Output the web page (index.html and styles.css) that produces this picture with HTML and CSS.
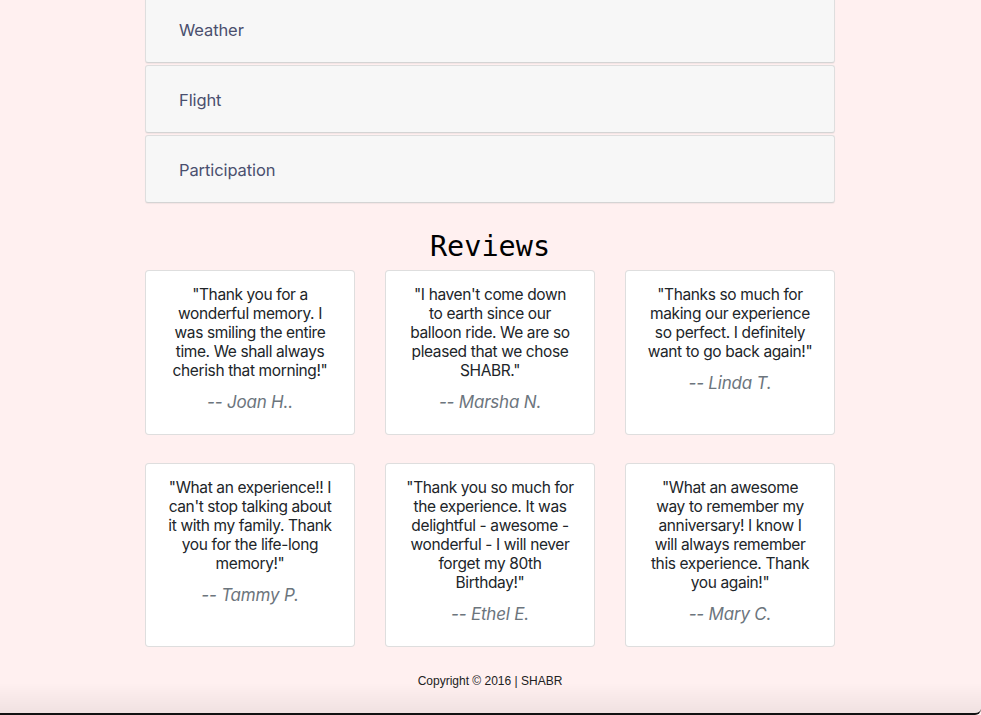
FILE: index.html
```html
<!DOCTYPE html>
<html lang="en">
<head>
<meta charset="utf-8">
<title>SHABR Reviews</title>
<link rel="stylesheet" href="styles.css">
</head>
<body>
<div class="page">
  <div class="panels">
    <div class="panel">Weather</div>
    <div class="panel">Flight</div>
    <div class="panel">Participation</div>
  </div>

  <h2 class="reviews-title">Reviews</h2>

  <div class="reviews">
    <div class="card">
      <p class="quote">"Thank you for a wonderful memory. I was smiling the entire time. We shall always cherish that morning!"</p>
      <p class="author">-- Joan H..</p>
    </div>
    <div class="card">
      <p class="quote">"I haven't come down to earth since our balloon ride. We are so pleased that we chose SHABR."</p>
      <p class="author">-- Marsha N.</p>
    </div>
    <div class="card">
      <p class="quote">"Thanks so much for making our experience so perfect. I definitely want to go back again!"</p>
      <p class="author">-- Linda T.</p>
    </div>
    <div class="card">
      <p class="quote">"What an experience!! I can't stop talking about it with my family. Thank you for the life-long memory!"</p>
      <p class="author">-- Tammy P.</p>
    </div>
    <div class="card">
      <p class="quote">"Thank you so much for the experience. It was delightful - awesome - wonderful - I will never forget my 80th Birthday!"</p>
      <p class="author">-- Ethel E.</p>
    </div>
    <div class="card">
      <p class="quote">"What an awesome way to remember my anniversary! I know I will always remember this experience. Thank you again!"</p>
      <p class="author">-- Mary C.</p>
    </div>
  </div>

  <footer class="footer">Copyright © 2016 | SHABR</footer>
</div>
<div class="window-edge"></div>
</body>
</html>
```

FILE: styles.css
```css
html, body {
  margin: 0;
  padding: 0;
  background: #fff0f0;
  height: 715px;
  overflow: hidden;
}

body {
  font-family: Inter, "Noto Sans", sans-serif;
  color: #212529;
}

.page {
  width: 690px;
  margin: -5px 0 0 calc(50% - 345.5px);
}

.panels {
  display: flex;
  flex-direction: column;
  gap: 2px;
}

.panel {
  box-sizing: border-box;
  height: 68px;
  display: flex;
  align-items: center;
  padding: 1px 33px 0;
  background: #f7f7f7;
  border: 1px solid #dedede;
  border-bottom-color: #d4d4d4;
  border-radius: 3px;
  box-shadow: 0 1px 1px rgba(0, 0, 0, 0.05);
  font-size: 16.5px;
  letter-spacing: -0.1px;
  color: #4a4f6e;
}

.reviews-title {
  margin: 21px 0 0;
  height: 46px;
  text-align: center;
  font-family: "DejaVu Sans Mono", monospace;
  font-weight: normal;
  font-size: 28.5px;
  line-height: 45px;
  color: #000;
}

.reviews {
  display: grid;
  grid-template-columns: repeat(3, 210px);
  column-gap: 30px;
  row-gap: 28px;
}

.card {
  box-sizing: border-box;
  background: #fff;
  border: 1px solid rgba(0, 0, 0, 0.13);
  border-radius: 4px;
  padding: 14px 20px 20px;
  text-align: center;
}

.quote {
  margin: 0 0 10px;
  font-size: 15.5px;
  letter-spacing: -0.38px;
  line-height: 19px;
  color: #212529;
}

.author {
  margin: 0;
  font-size: 17px;
  letter-spacing: -0.2px;
  line-height: 24px;
  font-style: italic;
  color: #6c757d;
}

.footer {
  margin-top: 27px;
  text-align: center;
  font-family: "Liberation Sans", Arial, sans-serif;
  font-size: 12px;
  line-height: 14px;
  color: #222;
}

.window-edge {
  position: fixed;
  left: 0;
  right: 0;
  bottom: 0;
  height: 30px;
  background: linear-gradient(to bottom, rgba(0, 0, 0, 0), rgba(0, 0, 0, 0.06));
  border-bottom: 2px solid #111;
  border-bottom-right-radius: 6px;
  pointer-events: none;
}
```
